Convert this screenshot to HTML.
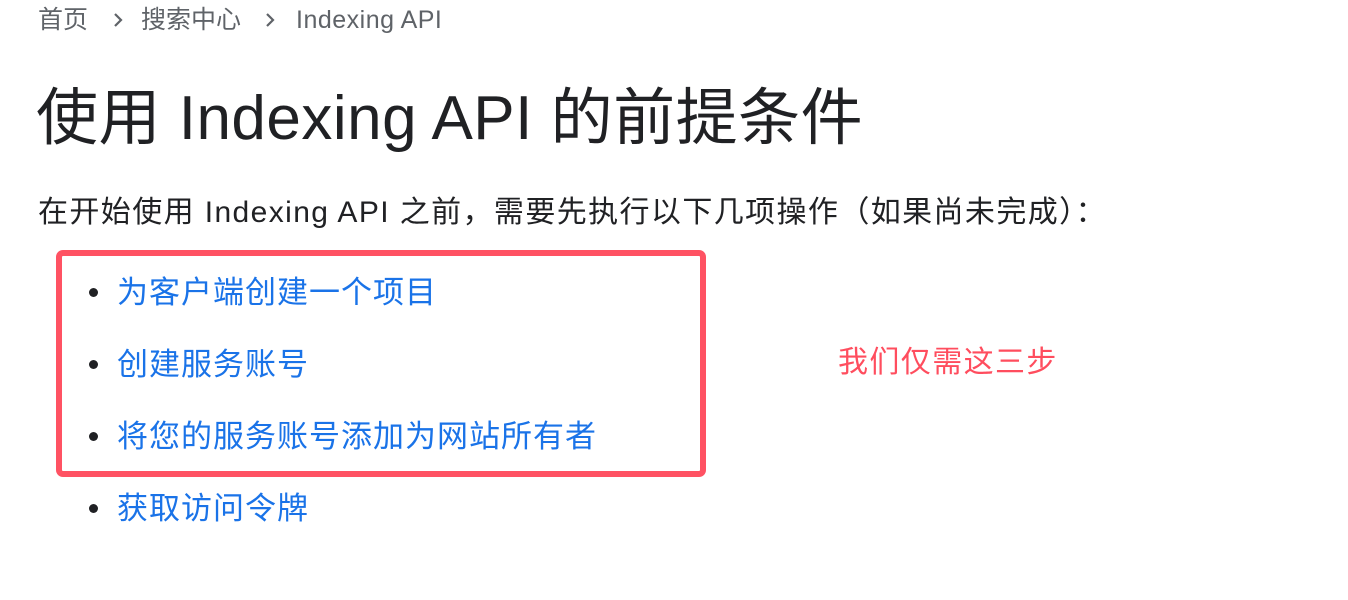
<!DOCTYPE html>
<html><head><meta charset="utf-8"><style>
body{margin:0;width:1348px;height:600px;background:#fff;position:relative;overflow:hidden;font-family:"Liberation Sans","Noto Sans CJK SC",sans-serif}
.a{position:absolute;white-space:nowrap;line-height:1}
.bc{top:8px;font-size:25px;color:#5f6368}
.chev{position:absolute;top:12px}
.t{left:36px;top:88px;font-size:62px;color:#202124;letter-spacing:0.5px}
.p{left:38px;top:198px;font-size:30px;color:#202124;letter-spacing:1.4px}
.li{left:117px;font-size:31px;color:#1a73e8;letter-spacing:1px}
.dot{position:absolute;width:9px;height:9px;border-radius:50%;background:#202124}
.box{position:absolute;left:56px;top:250px;width:638px;height:215px;border:6px solid #ff5263;border-radius:7px}
.r{left:838px;top:348px;font-size:30px;color:#ff4d5e;letter-spacing:1.4px}
</style></head><body>
<div class="a bc" style="left:38px">首页</div>
<svg class="chev" style="left:110px" width="16" height="16" viewBox="0 0 16 16"><path d="M5 2l6 6-6 6" fill="none" stroke="#5f6368" stroke-width="2.2"/></svg>
<div class="a bc" style="left:141px">搜索中心</div>
<svg class="chev" style="left:262px" width="16" height="16" viewBox="0 0 16 16"><path d="M5 2l6 6-6 6" fill="none" stroke="#5f6368" stroke-width="2.2"/></svg>
<div class="a bc" style="left:296px;letter-spacing:0.5px">Indexing API</div>
<div class="a t">使用 Indexing API 的前提条件</div>
<div class="a p">在开始使用 Indexing API 之前，需要先执行以下几项操作（如果尚未完成）：</div>
<div class="box"></div>
<div class="dot" style="left:89px;top:288px"></div><div class="a li" style="top:277px">为客户端创建一个项目</div>
<div class="dot" style="left:89px;top:360px"></div><div class="a li" style="top:349px">创建服务账号</div>
<div class="dot" style="left:89px;top:432px"></div><div class="a li" style="top:421px">将您的服务账号添加为网站所有者</div>
<div class="dot" style="left:89px;top:504px"></div><div class="a li" style="top:493px">获取访问令牌</div>
<div class="a r">我们仅需这三步</div>
</body></html>
